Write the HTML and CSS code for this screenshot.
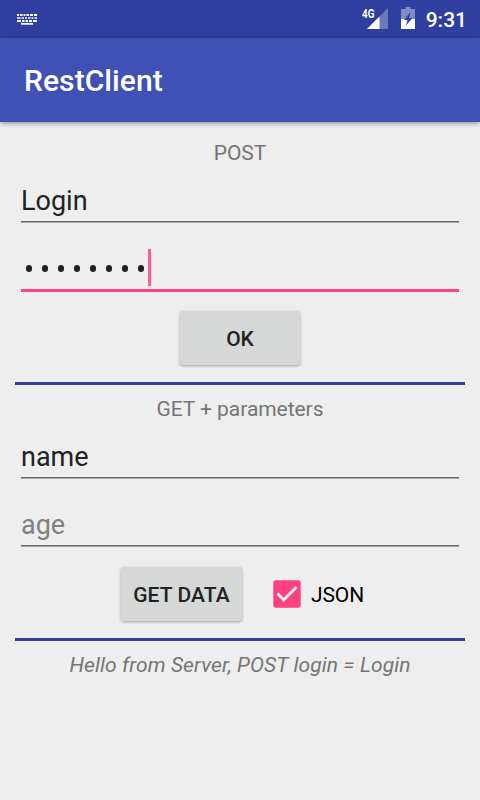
FILE: index.html
```html
<!DOCTYPE html>
<html lang="en">
<head>
<meta charset="utf-8">
<title>RestClient</title>
<link rel="stylesheet" href="styles.css">
</head>
<body>
<header class="status-bar">
  <svg class="keyboard" width="20" height="11" viewBox="0 0 20 11" stroke="#fff" fill="none">
    <path d="M0 1h2M3 1h2.500M6.500 1h2M9.500 1h2.500M13 1h3M17 1h3" stroke-width="1.8"/>
    <path d="M0 4h3.500M4.500 4h2.500M8 4h2M11 4h2.500M14.500 4h2M17.500 4h2.500" stroke-width="1.6"/>
    <path d="M0 7h4M5 7h2.500M8.500 7h2.500M12 7h3M16 7h4" stroke-width="1.8"/>
    <path d="M4 9.800h12" stroke-width="1.8"/>
  </svg>
  <div class="status-icons">
    <div class="signal">
      <span class="network">4G</span>
      <svg width="27" height="22" viewBox="0 0 27 22">
        <path d="M27 0v21H6z" fill="#fff" fill-opacity=".3"/>
        <path d="M18.500 8.500V21H6z" fill="#fff"/>
      </svg>
    </div>
    <svg class="battery" width="14" height="22" viewBox="0 0 14 22">
      <path d="M4.500 0h5v2H14v10H0V2h4.500z" fill="#fff" fill-opacity=".4"/>
      <path d="M0 12h14v10H0z" fill="#fff"/>
      <path d="M9.500 5L3 13h3.500L5 18.500 11.500 11H8z" fill="#303f9f"/>
    </svg>
    <span class="clock">9:31</span>
  </div>
</header>
<div class="app-bar"><h1>RestClient</h1></div>
<main>
  <section>
    <div class="label">POST</div>
    <div class="field"><span>Login</span></div>
    <div class="field focused">
      <span class="dots"><i></i><i></i><i></i><i></i><i></i><i></i><i></i><i></i></span><span class="caret"></span>
    </div>
    <div class="actions"><button class="ok">OK</button></div>
  </section>
  <section>
    <div class="label">GET + parameters</div>
    <div class="field"><span>name</span></div>
    <div class="field hint"><span>age</span></div>
    <div class="actions get-actions">
      <button class="get">GET DATA</button>
      <div class="check">
        <svg width="28" height="28" viewBox="0 0 28 28">
          <rect x=".3" y=".3" width="27.400" height="27.400" rx="2.500" fill="#ff4081"/>
          <path d="M4.500 13.500l6.300 6.300L23.500 7" fill="none" stroke="#eee" stroke-width="3"/>
        </svg>
        <span>JSON</span>
      </div>
    </div>
  </section>
  <p class="label response">Hello from Server, POST login = Login</p>
</main>
</body>
</html>
```

FILE: styles.css
```css
* { box-sizing: border-box; }
body {
  margin: 0;
  height: 800px;
  overflow: hidden;
  background: #eee;
  color: #212121;
  font-family: Roboto, sans-serif;
}
.status-bar {
  display: flex;
  justify-content: space-between;
  height: 38px;
  padding: 0 13px 0 17px;
  background: #303f9f;
  color: #fff;
}
.keyboard { margin-top: 14px; }
.status-icons { display: flex; }
.signal { position: relative; width: 27px; margin: 8px 13px 0 0; }
.signal svg, .battery { display: block; }
.network {
  position: absolute;
  left: 1px;
  top: 0;
  font-size: 13px;
  line-height: 11px;
  font-weight: 700;
  transform: scaleX(.76);
  transform-origin: left;
}
.battery { margin: 7px 11px 0 0; }
.clock { font-size: 21px; line-height: 41px; font-weight: 500; }
.app-bar {
  position: relative;
  display: flex;
  align-items: center;
  height: 84px;
  padding: 2px 0 0 24px;
  background: #3f51b5;
  color: #fff;
  box-shadow: 0 1px 5px rgba(0, 0, 0, .45);
}
h1 { margin: 0; font-size: 30px; line-height: 36px; font-weight: 500; letter-spacing: .08px; }
main { padding: 7px 15px 0; }
section {
  height: 256px;
  padding-top: 10px;
  border-bottom: 3px solid #303f9f;
}
.label {
  height: 28px;
  line-height: 28px;
  font-size: 21px;
  text-align: center;
  color: #757575;
  letter-spacing: -.05px;
}
.field {
  display: flex;
  height: 55px;
  margin: 0 6px 13px;
  padding-top: 16px;
  border-bottom: 1px solid #6e6e6e;
  box-shadow: 0 1px #a0a0a0;
  font-size: 27px;
  line-height: 36px;
}
.hint { color: #808080; }
.focused {
  height: 57px;
  margin-bottom: 11px;
  padding-top: 14px;
  border-bottom: 3px solid #ff4081;
  box-shadow: none;
}
.dots { display: flex; gap: 10px; padding: 16px 0 0 5px; }
.dots i { width: 6px; height: 7px; border-radius: 3px; background: #212121; }
.caret { width: 3px; height: 37px; margin-left: 4px; background: #ff5a92; }
.actions {
  display: flex;
  align-items: center;
  justify-content: center;
  height: 70px;
}
button {
  height: 54px;
  padding: 0;
  border: 0;
  border-radius: 3px;
  background: #d6d8d7;
  box-shadow: 0 1px 3px rgba(0, 0, 0, .32);
  color: #212121;
  font: 500 21px/56px Roboto, sans-serif;
}
.ok { width: 120px; }
.get { width: 121px; letter-spacing: .1px; }
.get-actions { justify-content: flex-start; padding-left: 106px; }
.check {
  display: flex;
  align-items: center;
  gap: 10px;
  margin: 0 0 0 31px;
  font-size: 21px;
  line-height: 28px;
  color: #000;
}
.check span { padding-top: 2px; letter-spacing: -.1px; }
.response { margin: 10px 0 0; font-style: italic; letter-spacing: .1px; }
```
